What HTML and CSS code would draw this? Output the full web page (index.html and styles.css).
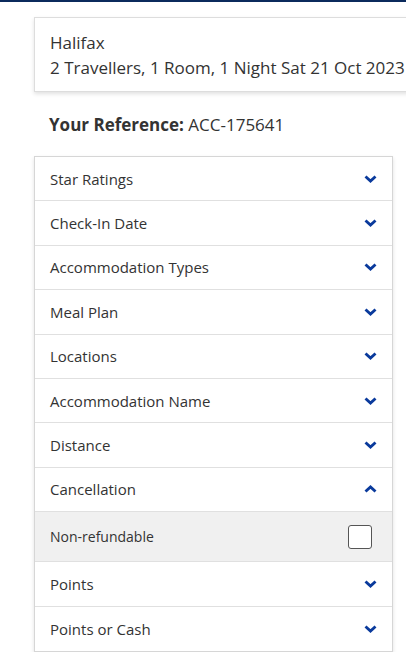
FILE: index.html
```html
<!DOCTYPE html>
<html>
<head>
<meta charset="utf-8">
<link rel="stylesheet" href="styles.css">
</head>
<body>
<div class="topbar"></div>
<main class="page">
  <section class="summary">
    <div class="summary-line">Halifax</div>
    <div class="summary-line">2 Travellers, 1 Room, 1 Night Sat 21 Oct 2023</div>
  </section>
  <p class="reference"><strong>Your Reference:</strong> ACC-175641</p>
  <section class="filters">
    <div class="filter-row"><span>Star Ratings</span><svg class="chev" viewBox="0 0 13 8"><path d="M1.5 1.5 L6.5 6 L11.5 1.5"/></svg></div>
    <div class="filter-row"><span>Check-In Date</span><svg class="chev" viewBox="0 0 13 8"><path d="M1.5 1.5 L6.5 6 L11.5 1.5"/></svg></div>
    <div class="filter-row"><span>Accommodation Types</span><svg class="chev" viewBox="0 0 13 8"><path d="M1.5 1.5 L6.5 6 L11.5 1.5"/></svg></div>
    <div class="filter-row"><span>Meal Plan</span><svg class="chev" viewBox="0 0 13 8"><path d="M1.5 1.5 L6.5 6 L11.5 1.5"/></svg></div>
    <div class="filter-row"><span>Locations</span><svg class="chev" viewBox="0 0 13 8"><path d="M1.5 1.5 L6.5 6 L11.5 1.5"/></svg></div>
    <div class="filter-row"><span>Accommodation Name</span><svg class="chev" viewBox="0 0 13 8"><path d="M1.5 1.5 L6.5 6 L11.5 1.5"/></svg></div>
    <div class="filter-row"><span>Distance</span><svg class="chev" viewBox="0 0 13 8"><path d="M1.5 1.5 L6.5 6 L11.5 1.5"/></svg></div>
    <div class="filter-row"><span>Cancellation</span><svg class="chev" viewBox="0 0 13 8"><path d="M1.5 6.5 L6.5 2 L11.5 6.5"/></svg></div>
    <div class="option-row"><span>Non-refundable</span><span class="checkbox"></span></div>
    <div class="filter-row"><span>Points</span><svg class="chev" viewBox="0 0 13 8"><path d="M1.5 1.5 L6.5 6 L11.5 1.5"/></svg></div>
    <div class="filter-row last"><span>Points or Cash</span><svg class="chev" viewBox="0 0 13 8"><path d="M1.5 1.5 L6.5 6 L11.5 1.5"/></svg></div>
  </section>
</main>
</body>
</html>
```
FILE: styles.css
```css
html, body {
  margin: 0;
  padding: 0;
  background: #fff;
  overflow: hidden;
}
body {
  font-family: "Open Sans", "Noto Sans", sans-serif;
  color: #333;
}
.topbar {
  height: 2px;
  background: #0b2a5c;
}
.page {
  padding: 15px 0 0 34px;
}
.summary {
  width: 400px;
  border: 1px solid #ddd;
  box-shadow: 0 2px 4px rgba(0,0,0,0.12);
  padding: 12px 15px 11px 15px;
  box-sizing: border-box;
  font-size: 17px;
  line-height: 25px;
  white-space: nowrap;
}
.reference {
  margin: 0;
  padding: 21px 0 0 15px;
  font-size: 17px;
  line-height: 24px;
}
.reference strong {
  font-weight: 700;
}
.filters {
  margin-top: 19px;
  width: 359px;
  box-sizing: border-box;
  border: 1px solid #d6d6d6;
  box-shadow: 0 2px 4px rgba(0,0,0,0.12);
}
.filter-row {
  height: 44.4px;
  box-sizing: border-box;
  border-bottom: 1px solid #e0e0e0;
  display: flex;
  align-items: center;
  justify-content: space-between;
  padding: 0 15px 0 15px;
  font-size: 15px;
}
.filter-row.last {
  border-bottom: none;
}
.chev {
  width: 13px;
  height: 8px;
  fill: none;
  stroke: #0a3a9c;
  stroke-width: 2.9;
  stroke-linecap: butt;
  stroke-linejoin: miter;
}
.option-row {
  height: 50px;
  box-sizing: border-box;
  background: #f0f0f0;
  border-bottom: 1px solid #e0e0e0;
  display: flex;
  align-items: center;
  justify-content: space-between;
  padding: 0 20px 0 15px;
  font-size: 14px;
}
.checkbox {
  width: 22px;
  height: 22px;
  border: 1px solid #555;
  border-radius: 3px;
  background: #fff;
}
```
